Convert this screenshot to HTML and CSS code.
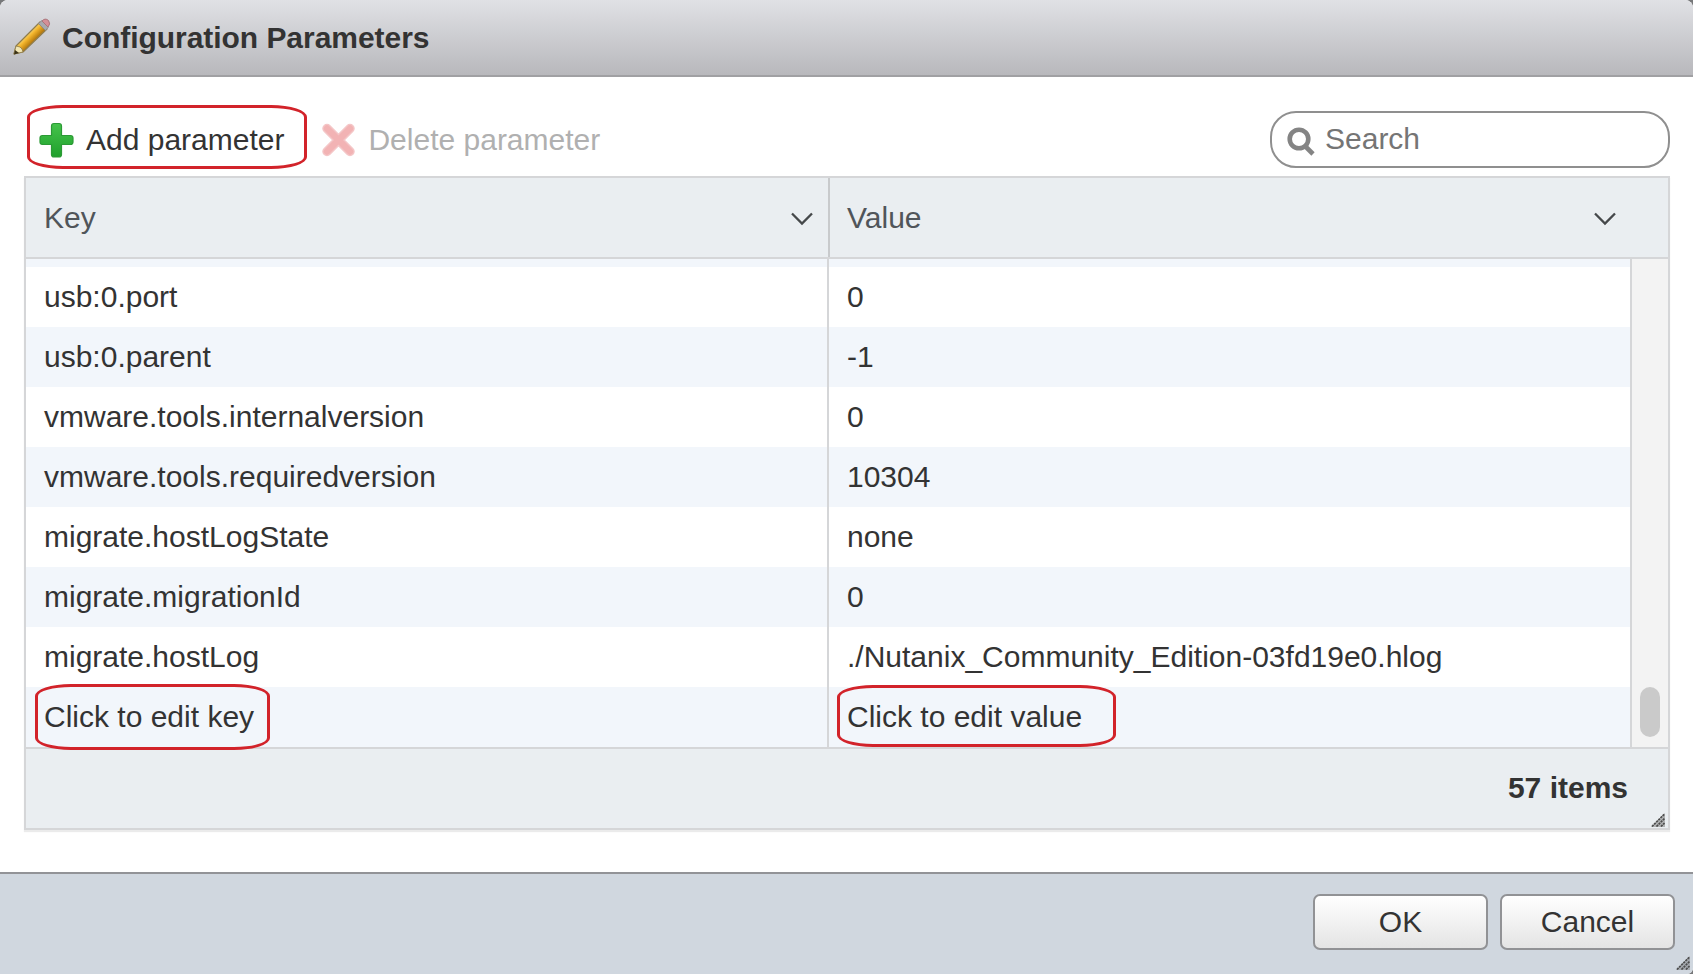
FILE: index.html
```html
<!DOCTYPE html>
<html lang="en">
<head>
<meta charset="utf-8">
<title>Configuration Parameters</title>
<link rel="stylesheet" href="styles.css">
</head>
<body>
<div class="dialog">
  <header class="titlebar">
    <svg class="pencil" width="40" height="40" viewBox="0 0 40 40">
      <defs>
        <linearGradient id="wood" gradientUnits="userSpaceOnUse" x1="15" y1="16" x2="22" y2="23">
          <stop offset="0" stop-color="#f6dc80"/><stop offset=".45" stop-color="#f3b52c"/><stop offset="1" stop-color="#b97d10"/>
        </linearGradient>
      </defs>
      <path d="M2 37 L4 29 L28 5 L35 12 L11 35 Z" fill="url(#wood)" stroke="#8f7c4c" stroke-width="1.200" stroke-linejoin="round"/>
      <path d="M2 37 L4 29 L8 30 L10 32 L11 35 Z" fill="#f2e6b4" stroke="#8c7a47" stroke-width=".8"/>
      <path d="M2 37.500 L3 33 L7 36 Z" fill="#3a3218"/>
      <path d="M26.500 6.500 L30 3.500 L36.500 10 L33.500 13.500 Z" fill="#a9a9ad" stroke="#85858a" stroke-width=".8"/>
      <path d="M30 4 Q33 .5 36.500 3.500 Q39 7 36 10 Z" fill="#d58f97" stroke="#a8757c" stroke-width="1"/>
    </svg>
    <h1 class="title">Configuration Parameters</h1>
  </header>

  <main class="content">
    <div class="toolbar">
      <div class="action">
        <svg class="action-icon" width="38" height="38" viewBox="0 0 38 38">
          <defs>
            <linearGradient id="leaf" x1="0" y1="0" x2="0" y2="1">
              <stop offset="0" stop-color="#45c34b"/><stop offset="1" stop-color="#1fa02c"/>
            </linearGradient>
          </defs>
          <path d="M17 2.500h5q2.500 0 2.500 2.500v9.500h9q2.500 0 2.500 2.500v4q0 2.500-2.500 2.500h-9v10q0 2.500-2.500 2.500h-5q-2.500 0-2.500-2.500v-10h-9q-2.500 0-2.500-2.500v-4q0-2.500 2.500-2.500h9v-9.500q0-2.500 2.500-2.500z" fill="url(#leaf)" stroke="#2b9a35" stroke-width="1.200"/>
        </svg>
        <span>Add parameter</span>
        <i class="mark mark-add"></i>
      </div>
      <div class="action disabled">
        <svg class="action-icon" width="38" height="38" viewBox="0 0 38 38">
          <path d="M8 7.500 L31 30.500 M31 7.500 L8 30.500" stroke="#f4c6c7" stroke-width="9.500" stroke-linecap="round"/>
          <path d="M8 7.500 L31 30.500 M31 7.500 L8 30.500" stroke="#f2b3b4" stroke-width="6.500" stroke-linecap="round"/>
        </svg>
        <span>Delete parameter</span>
      </div>
      <div class="search">
        <svg class="search-icon" width="30" height="32" viewBox="0 0 30 32">
          <circle cx="13" cy="13" r="9.300" fill="none" stroke="#848484" stroke-width="4.600"/>
          <path d="M19 20 L27 28" stroke="#848484" stroke-width="4.600"/>
        </svg>
        <span>Search</span>
      </div>
    </div>

    <section class="grid">
      <div class="grid-head">
        <div class="head-cell head-key"><span>Key</span>
          <svg class="chevron" width="24" height="16" viewBox="0 0 24 16"><path d="M2 2.500 L12 12.500 L22 2.500" fill="none" stroke="#45484a" stroke-width="2.300"/></svg>
        </div>
        <div class="head-cell head-value"><span>Value</span>
          <svg class="chevron" width="24" height="16" viewBox="0 0 24 16"><path d="M2 2.500 L12 12.500 L22 2.500" fill="none" stroke="#45484a" stroke-width="2.300"/></svg>
        </div>
      </div>
      <div class="grid-body">
        <div class="rows">
          <div class="row sliver"><div class="cell key"></div><div class="cell"></div></div>
          <div class="row"><div class="cell key">usb:0.port</div><div class="cell">0</div></div>
          <div class="row alt"><div class="cell key">usb:0.parent</div><div class="cell">-1</div></div>
          <div class="row"><div class="cell key">vmware.tools.internalversion</div><div class="cell">0</div></div>
          <div class="row alt"><div class="cell key">vmware.tools.requiredversion</div><div class="cell">10304</div></div>
          <div class="row"><div class="cell key">migrate.hostLogState</div><div class="cell">none</div></div>
          <div class="row alt"><div class="cell key">migrate.migrationId</div><div class="cell">0</div></div>
          <div class="row"><div class="cell key">migrate.hostLog</div><div class="cell">./Nutanix_Community_Edition-03fd19e0.hlog</div></div>
          <div class="row alt"><div class="cell key">Click to edit key<i class="mark mark-key"></i></div><div class="cell">Click to edit value<i class="mark mark-value"></i></div></div>
        </div>
        <div class="scrollbar"><div class="thumb"></div></div>
      </div>
      <div class="grid-foot">
        <span>57 items</span>
        <svg class="grip grip-grid" width="14" height="14" viewBox="0 0 14 14"><path d="M0 14 L14 0 V14 Z" fill="#b0b2b3"/><path d="M1 13.500 L13.500 1 M5.500 13.500 L13.500 5.500 M10 13.500 L13.500 10" stroke="#4c4c4c" stroke-width="1.700" stroke-dasharray="2.200 .8"/></svg>
      </div>
    </section>
  </main>

  <footer class="buttons">
    <button class="button">OK</button>
    <button class="button">Cancel</button>
    <svg class="grip grip-dialog" width="14" height="14" viewBox="0 0 14 14"><path d="M0 14 L14 0 V14 Z" fill="#a4a8ae"/><path d="M1 13.500 L13.500 1 M5.500 13.500 L13.500 5.500 M10 13.500 L13.500 10" stroke="#4c4c4c" stroke-width="1.700" stroke-dasharray="2.200 .8"/></svg>
  </footer>
</div>
</body>
</html>
```
FILE: styles.css
```css
* { box-sizing: border-box; }

body {
  margin: 0;
  background: #77787a;
  font-family: "Liberation Sans", Arial, sans-serif;
  font-size: 30px;
  color: #333;
}

.dialog {
  display: flex;
  flex-direction: column;
  width: 1693px;
  height: 974px;
  overflow: hidden;
  background: #fff;
  border-radius: 8px 8px 6px 0;
}

.titlebar {
  display: flex;
  align-items: center;
  gap: 10px;
  height: 77px;
  padding: 0 0 2px 12px;
  background: linear-gradient(#e0e1e5, #b8b8bc);
  border-bottom: 2px solid #a0a0a3;
}

.title {
  margin: 2px 0 0;
  font-size: 30px;
  line-height: 40px;
  font-weight: bold;
  letter-spacing: -0.04px;
}

/* The small icons are drawn with slightly soft edges */
.pencil,
.action-icon,
.search-icon { filter: blur(0.6px); }

.content {
  flex: 1;
  padding: 34px 23px 0 24px;
}

.toolbar {
  display: flex;
  align-items: center;
  height: 57px;
  margin-bottom: 8px;
}

.action {
  position: relative;
  display: flex;
  align-items: center;
  gap: 11px;
  padding-left: 13px;
  margin-right: 22px;
}

.disabled { color: #b0b0b0; }

.search {
  display: flex;
  align-items: center;
  gap: 9px;
  width: 400px;
  height: 57px;
  margin-left: auto;
  padding: 0 0 2px 14px;
  border: 2px solid #8f8f8f;
  border-radius: 26px;
  color: #757575;
}

.search-icon { margin-top: 6px; }

.grid {
  width: 1646px;
  border: 2px solid #d5d6d8;
  box-shadow: 0 2px 1px #ebebeb;
}

.grid-head {
  display: flex;
  height: 81px;
  background: #eaeef1;
  border-bottom: 2px solid #d5d6d8;
  color: #50555a;
}

.head-cell {
  display: flex;
  align-items: center;
  justify-content: space-between;
  padding-left: 18px;
}

.head-key {
  width: 804px;
  padding-right: 14px;
  border-right: 2px solid #c8cacc;
}

.head-value {
  flex: 1;
  padding: 0 51px 0 17px;
}

.chevron { margin-top: 3px; }

.grid-body {
  display: flex;
  height: 488px;
}

.rows { flex: 1; }

.row {
  display: flex;
  height: 60px;
  line-height: 60px;
}

.alt, .sliver { background: #f2f6fb; }
.sliver { height: 8px; }

.cell {
  position: relative;
  flex: 1;
  padding-left: 18px;
  white-space: nowrap;
}

.key {
  flex: none;
  width: 803px;
  border-right: 2px solid #d5d6d8;
}

.scrollbar {
  width: 38px;
  padding: 428px 8px 0;
  background: #f3f3f3;
  border-left: 2px solid #d5d6d8;
}

.thumb {
  height: 50px;
  border-radius: 10px;
  background: #cacaca;
}

.grid-foot {
  position: relative;
  display: flex;
  align-items: center;
  justify-content: flex-end;
  height: 81px;
  padding: 0 40px 2px 0;
  background: #eaeef1;
  border-top: 2px solid #d5d6d8;
  font-weight: bold;
}

.buttons {
  position: relative;
  display: flex;
  justify-content: flex-end;
  gap: 12px;
  height: 102px;
  padding: 20px 18px 0 0;
  background: #d0d7df;
  border-top: 2px solid #929397;
}

.button {
  width: 175px;
  height: 56px;
  padding: 0;
  border: 2px solid #919295;
  border-radius: 7px;
  background: linear-gradient(#fff, #e4e4e4);
  color: #333;
  font: inherit;
}

.grip { position: absolute; }
.grip-grid { right: 3px; bottom: 1px; }
.grip-dialog { right: 3px; bottom: 4px; }

/* Hand-drawn style highlight outlines laid over the controls */
.mark {
  position: absolute;
  border: 3px solid #d2232a;
  border-radius: 36px / 12px;
}

.mark-add { left: 3px; top: -16px; width: 280px; height: 64px; }
.mark-key { left: 9px; top: -3px; width: 235px; height: 66px; z-index: 1; }
.mark-value { left: 8px; top: -2px; width: 279px; height: 62px; z-index: 1; }
```
